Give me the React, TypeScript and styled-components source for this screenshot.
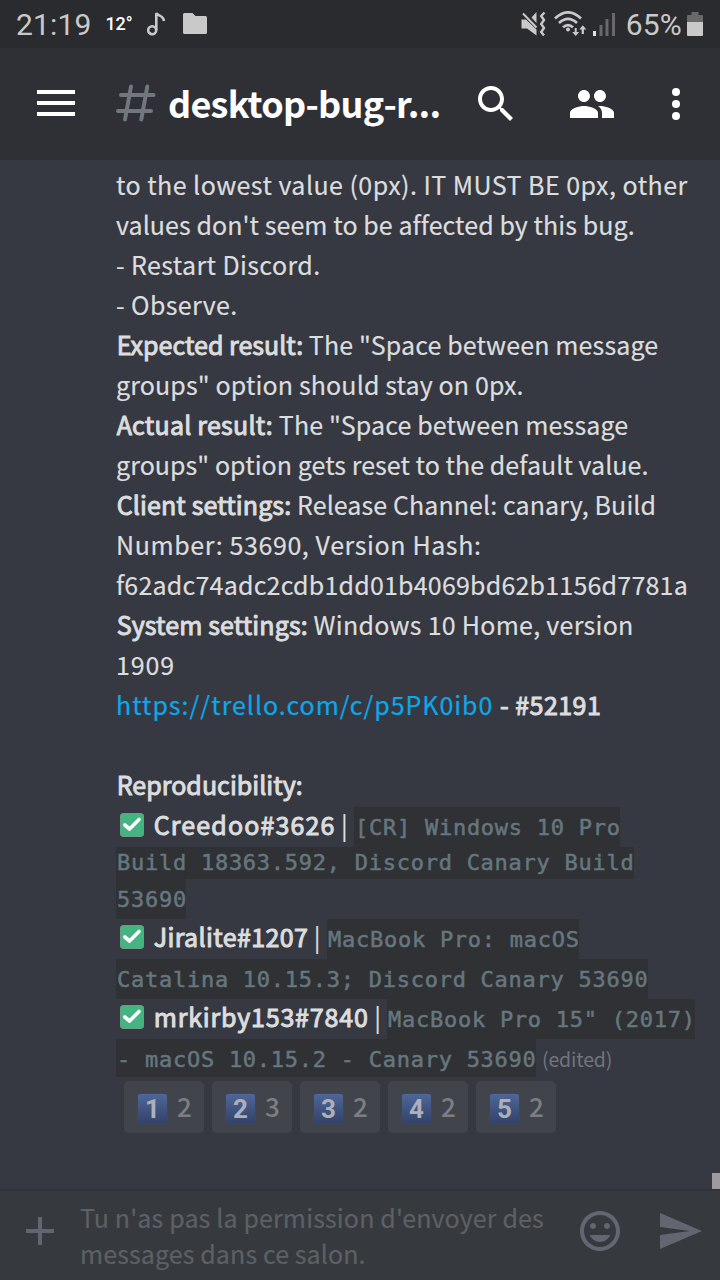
import React from 'react';
import styled, { createGlobalStyle } from 'styled-components';

const GlobalStyle = createGlobalStyle`
  * { box-sizing: border-box; }
  body { margin: 0; background: #36393f; }
`;

const Screen = styled.div`
  display: flex;
  flex-direction: column;
  width: 720px;
  height: 1280px;
  overflow: hidden;
  background: #363941;
  color: #dcddde;
  font-family: "Noto Sans CJK JP", "Noto Sans", sans-serif;
  font-size: 25px;
`;

/* ---------- status bar ---------- */

const StatusBar = styled.div`
  display: flex;
  justify-content: space-between;
  height: 48px;
  padding: 0 17px 0 16px;
  background: #2a2b2f;
  color: #c9c9c9;
  font-family: Roboto, sans-serif;
`;

const StatusGroup = styled.div`
  display: flex;
  align-items: center;
  height: 48px;
`;

const StatusText = styled.span`
  font-size: 30px;
  line-height: 49px;
  letter-spacing: 0.15px;
`;

const Temperature = styled.span`
  margin: 0 14px 0 14px;
  color: #fff;
  font-size: 18px;
  font-weight: 500;
  line-height: 48px;
  letter-spacing: -0.1px;
`;

const Battery = styled.span`
  margin-left: 10px;
`;

const StatusIcon = styled.svg<{ $gap?: number }>`
  display: block;
  flex: none;
  margin-left: ${(p) => p.$gap ?? 0}px;
`;

/* ---------- channel header ---------- */

const Header = styled.header`
  display: flex;
  align-items: center;
  height: 112px;
  padding: 0 20px 0 32px;
  background: #2f3035;
  color: #fff;
`;

const HeaderIcon = styled.svg<{ $gap?: number }>`
  display: block;
  flex: none;
  margin-left: ${(p) => p.$gap ?? 0}px;
  fill: currentColor;
`;

const ChannelName = styled.h1`
  width: 292px;
  margin: 0 0 4px 12px;
  font-size: 36px;
  font-weight: 700;
  line-height: 48px;
  letter-spacing: -0.75px;
  white-space: nowrap;
`;

/* ---------- messages ---------- */

const Messages = styled.main`
  display: flex;
  height: 1029px;
`;

const MessageBody = styled.div`
  flex: 1;
  padding: 7px 0 0 116px;
`;

const Row = styled.div<{ $height?: number }>`
  display: flex;
  height: ${(p) => p.$height ?? 40}px;
  white-space: pre;
`;

const Text = styled.span<{ $track?: number }>`
  line-height: 34px;
  letter-spacing: ${(p) => p.$track ?? 0}px;
  -webkit-text-stroke: 0.2px currentColor;
`;

const Strong = styled(Text)`
  margin-left: 0.7px;
  -webkit-text-stroke: 1px currentColor;
`;

const Link = styled(Text)`
  color: #0da7ea;
`;

const Code = styled.code<{ $line?: number; $width: number }>`
  width: ${(p) => p.$width}px;
  padding-left: 1px;
  background: #2f3135;
  color: #66777f;
  font-family: "DejaVu Sans Mono", monospace;
  font-size: 22px;
  line-height: ${(p) => p.$line ?? 41}px;
  letter-spacing: 0.74px;
  -webkit-text-stroke: 0.5px currentColor;
`;

const Edited = styled.span`
  margin-left: 6px;
  color: #72757b;
  font-size: 19.5px;
  line-height: 40px;
  letter-spacing: -0.15px;
`;

const Tester = styled.span<{ $width: number }>`
  display: flex;
  flex: none;
  width: ${(p) => p.$width}px;
`;

const CheckIcon = styled.svg`
  display: block;
  flex: none;
  margin: 6px 9px 0 4px;
`;

const Reactions = styled.div`
  display: flex;
  gap: 8px;
  padding: 4px 0 0 8px;
`;

const Reaction = styled.div`
  display: flex;
  align-items: center;
  width: 80px;
  height: 52px;
  padding: 0 0 3px 13px;
  border-radius: 5px;
  background: #41444a;
`;

const Keycap = styled.span`
  width: 31px;
  height: 31px;
  margin-top: 5px;
  border: 1px solid #35466f;
  border-radius: 3px;
  background: linear-gradient(#4f6699, #33446a);
  color: #adb0b8;
  font-family: Roboto, sans-serif;
  font-size: 26px;
  font-weight: 700;
  line-height: 31px;
  text-align: center;
`;

const Count = styled.span`
  margin: 1px 0 0 9px;
  color: #7c7e83;
  font-size: 26px;
  font-weight: 500;
  line-height: 40px;
`;

const ScrollTrack = styled.div`
  display: flex;
  align-items: flex-end;
  width: 8px;
`;

const ScrollThumb = styled.div`
  width: 8px;
  height: 16px;
  background: #9b9ba0;
`;

/* ---------- composer ---------- */

const Composer = styled.footer`
  display: flex;
  height: 91px;
  padding-left: 20px;
  border-top: 2px solid #303337;
  background: #36393e;
  color: #616670;
`;

const ComposerIcon = styled.svg<{ $gap?: number }>`
  display: block;
  flex: none;
  margin: 16px 0 0 ${(p) => p.$gap ?? 0}px;
  fill: currentColor;
`;

const Placeholder = styled.div`
  display: flex;
  flex-direction: column;
  width: 516px;
  padding: 6px 0 0 20px;
  color: #5d6064;
`;

const PlaceholderLine = styled.span<{ $track: number }>`
  height: 36px;
  line-height: 40px;
  letter-spacing: ${(p) => p.$track}px;
  white-space: nowrap;
  -webkit-text-stroke: 0.2px currentColor;
`;

function Check() {
  return (
    <CheckIcon width="24" height="24" viewBox="0 0 24 24">
      <rect x="0.5" y="0.5" width="23" height="23" rx="2.5" fill="#43b581" stroke="#6b9c86" />
      <path d="M4.8 12 9.6 16 19 6.500" fill="none" stroke="#fff" strokeWidth="3.600" strokeLinecap="round" strokeLinejoin="round" />
    </CheckIcon>
  );
}

const reactions = [
  { key: '1', count: 2 },
  { key: '2', count: 3 },
  { key: '3', count: 2 },
  { key: '4', count: 2 },
  { key: '5', count: 2 },
];

export default function App() {
  return (
    <Screen>
      <GlobalStyle />
      <StatusBar>
        <StatusGroup>
          <StatusText>21:19</StatusText>
          <Temperature>12°</Temperature>
          <StatusIcon width="20" height="26" viewBox="0 0 20 26">
            <circle cx="5.200" cy="19.200" r="4" fill="none" stroke="#c9c9c9" strokeWidth="2.600" />
            <path d="M9.300 19V2.500M9.300 1.800C10 5.200 16.200 3.500 17 10" fill="none" stroke="#c9c9c9" strokeWidth="2.600" />
          </StatusIcon>
          <StatusIcon width="24" height="22" viewBox="0 0 24 22" $gap={16}>
            <path d="M1.500 0H9.500L12.500 3H22.500Q24 3 24 4.500V19.500Q24 21 22.500 21H1.500Q0 21 0 19.500V1.500Q0 0 1.500 0Z" fill="#c9c9c9" />
          </StatusIcon>
        </StatusGroup>
        <StatusGroup>
          <StatusIcon width="25" height="26" viewBox="0 0 25 26">
            <path d="M0.500 8.500H5L15.500 18.500V24.500L6 17.500H0.500ZM15.500 1V12L10.500 6.500Z" fill="#c9c9c9" />
            <path d="M2 2.500 15.500 16.500" stroke="#c9c9c9" strokeWidth="2" />
            <path d="M23.500 1.500 20.200 5 23 9 20.200 13 23 17 20.200 21 23 24.500" fill="none" stroke="#c9c9c9" strokeWidth="2.400" />
          </StatusIcon>
          <StatusIcon width="34" height="26" viewBox="0 0 34 26" $gap={8}>
            <g fill="none" stroke="#c9c9c9" strokeWidth="2.600">
              <path d="M1 7.500Q14-4.800 27 7.500" />
              <path d="M5 12Q14 3.700 23 12" />
              <path d="M9 16.300Q14 11.800 19 16.300" />
            </g>
            <circle cx="14" cy="18.500" r="2" fill="#c9c9c9" />
            <path d="M20.700 17h2v4h2.500l-3.500 4-3.500-4h2.500zM27.700 23h2.200v-4.500h2.400L28.800 14.200l-3.500 4.300h2.400z" fill="#c9c9c9" />
          </StatusIcon>
          <StatusIcon width="23" height="24" viewBox="0 0 23 24" $gap={5}>
            <rect x="0" y="19" width="3" height="5" fill="#e0e0e0" />
            <path d="M6.500 13h3v11h-3zM12.500 7h3v17h-3zM19 1h3v23h-3z" fill="#69696c" />
          </StatusIcon>
          <Battery>
            <StatusText>65%</StatusText>
          </Battery>
          <StatusIcon width="16" height="24" viewBox="0 0 16 24" $gap={5}>
            <path d="M1 3h3.500V0h7v3H15q1 0 1 1v7H0V4q0-1 1-1z" fill="#69696c" />
            <path d="M0 10h16v13q0 1-1 1H1q-1 0-1-1z" fill="#c9c9c9" />
          </StatusIcon>
        </StatusGroup>
      </StatusBar>

      <Header>
        <HeaderIcon width="48" height="48" viewBox="0 0 48 48">
          <path d="M5 10h38v4H5zM5 21h38v4H5zM5 32h38v4H5z" />
        </HeaderIcon>
        <HeaderIcon width="40" height="40" viewBox="0 0 40 40" $gap={36}>
          <path
            d="M15 2.500 9 35.500M31.300 2.500 25.300 35.500M5 10.900H37.500M2 26.900H35"
            fill="none"
            stroke="#72767d"
            strokeWidth="4"
            strokeLinecap="round"
          />
        </HeaderIcon>
        <ChannelName>desktop-bug-r...</ChannelName>
        <HeaderIcon width="48" height="48" viewBox="0 0 24 24" $gap={12}>
          <path d="M15.500 14h-.79l-.28-.27C15.410 12.590 16 11.110 16 9.500 16 5.910 13.090 3 9.500 3S3 5.910 3 9.500 5.910 16 9.500 16c1.610 0 3.090-.59 4.230-1.570l.27.28v.79l5 4.990L20.490 19l-4.990-5zm-6 0C7.010 14 5 11.990 5 9.500S7.010 5 9.500 5 14 7.010 14 9.500 11.990 14 9.500 14z" />
        </HeaderIcon>
        <HeaderIcon width="48" height="48" viewBox="0 0 24 24" $gap={48}>
          <path d="M16 11c1.660 0 2.990-1.340 2.990-3S17.660 5 16 5s-3 1.340-3 3 1.340 3 3 3zm-8 0c1.660 0 2.990-1.340 2.990-3S9.660 5 8 5 5 6.340 5 8s1.340 3 3 3zm0 2c-2.330 0-7 1.170-7 3.500V19h14v-2.500c0-2.330-4.670-3.500-7-3.500zm8 0c-.29 0-.62.02-.97.05 1.160.84 1.970 1.970 1.970 3.450V19h6v-2.500c0-2.330-4.670-3.500-7-3.500z" />
        </HeaderIcon>
        <HeaderIcon width="48" height="48" viewBox="0 0 24 24" $gap={36}>
          <circle cx="12" cy="6" r="2" />
          <circle cx="12" cy="12" r="2" />
          <circle cx="12" cy="18" r="2" />
        </HeaderIcon>
      </Header>

      <Messages>
        <MessageBody>
          <Row><Text $track={0.46}>to the lowest value (0px). IT MUST BE 0px, other</Text></Row>
          <Row><Text $track={0.07}>values don't seem to be affected by this bug.</Text></Row>
          <Row><Text $track={0.39}>- Restart Discord.</Text></Row>
          <Row><Text $track={0.35}>- Observe.</Text></Row>
          <Row>
            <Strong $track={0.02}>Expected result: </Strong>
            <Text $track={0.14}>The "Space between message</Text>
          </Row>
          <Row><Text $track={0.13}>groups" option should stay on 0px.</Text></Row>
          <Row>
            <Strong $track={0.23}>Actual result: </Strong>
            <Text $track={0.14}>The "Space between message</Text>
          </Row>
          <Row><Text $track={0.05}>groups" option gets reset to the default value.</Text></Row>
          <Row>
            <Strong $track={0.13}>Client settings: </Strong>
            <Text $track={0.09}>Release Channel: canary, Build</Text>
          </Row>
          <Row><Text $track={0.6}>Number: 53690, Version Hash:</Text></Row>
          <Row><Text $track={0.21}>f62adc74adc2cdb1dd01b4069bd62b1156d7781a</Text></Row>
          <Row>
            <Strong $track={0.12}>System settings: </Strong>
            <Text $track={0.27}>Windows 10 Home, version</Text>
          </Row>
          <Row><Text $track={0.9}>1909</Text></Row>
          <Row>
            <Link $track={0.97}>https://trello.com/c/p5PK0ib0</Link>
            <Strong $track={0.45}> - #52191</Strong>
          </Row>
          <Row />
          <Row><Strong $track={0.03}>Reproducibility:</Strong></Row>
          <Row>
            <Tester $width={238}>
              <Check />
              <Strong $track={1.13}>Creedoo#3626</Strong>
              <Text> |</Text>
            </Tester>
            <Code $width={266}>[CR] Windows 10 Pro</Code>
          </Row>
          <Row $height={32}>
            <Code $width={518} $line={31}>Build 18363.592, Discord Canary Build</Code>
          </Row>
          <Row>
            <Code $width={70}>53690</Code>
          </Row>
          <Row>
            <Tester $width={211}>
              <Check />
              <Strong $track={0.38}>Jiralite#1207</Strong>
              <Text> |</Text>
            </Tester>
            <Code $width={252}>MacBook Pro: macOS</Code>
          </Row>
          <Row>
            <Code $width={532}>Catalina 10.15.3; Discord Canary 53690</Code>
          </Row>
          <Row>
            <Tester $width={271}>
              <Check />
              <Strong $track={0.82}>mrkirby153#7840</Strong>
              <Text> |</Text>
            </Tester>
            <Code $width={308}>MacBook Pro 15" (2017)</Code>
          </Row>
          <Row $height={38}>
            <Code $width={420}>- macOS 10.15.2 - Canary 53690</Code>
            <Edited>(edited)</Edited>
          </Row>
          <Reactions>
            {reactions.map((r) => (
              <Reaction key={r.key}>
                <Keycap>{r.key}</Keycap>
                <Count>{r.count}</Count>
              </Reaction>
            ))}
          </Reactions>
        </MessageBody>
        <ScrollTrack>
          <ScrollThumb />
        </ScrollTrack>
      </Messages>

      <Composer>
        <ComposerIcon width="40" height="48" viewBox="0 0 40 48">
          <path d="M6 22h12V10h4v12h12v4H22v12h-4V26H6z" />
        </ComposerIcon>
        <Placeholder>
          <PlaceholderLine $track={0.14}>Tu n'as pas la permission d'envoyer des</PlaceholderLine>
          <PlaceholderLine $track={0.1}>messages dans ce salon.</PlaceholderLine>
        </Placeholder>
        <ComposerIcon width="48" height="48" viewBox="0 0 24 24">
          <path d="M11.990 2C6.470 2 2 6.480 2 12s4.470 10 9.990 10C17.520 22 22 17.520 22 12S17.520 2 11.990 2zM12 20c-4.420 0-8-3.580-8-8s3.580-8 8-8 8 3.580 8 8-3.580 8-8 8zm3.500-9c.83 0 1.500-.67 1.500-1.500S16.330 8 15.500 8 14 8.670 14 9.500s.67 1.500 1.500 1.500zm-7 0c.83 0 1.500-.67 1.500-1.500S9.330 8 8.500 8 7 8.670 7 9.500 7.670 11 8.500 11zm3.500 6.500c2.330 0 4.310-1.460 5.110-3.500H6.890c.8 2.040 2.780 3.500 5.110 3.500z" />
        </ComposerIcon>
        <ComposerIcon width="48" height="48" viewBox="0 0 24 24" $gap={32}>
          <path d="M2.010 21L23 12 2.010 3 2 10l15 2-15 2z" />
        </ComposerIcon>
      </Composer>
    </Screen>
  );
}
